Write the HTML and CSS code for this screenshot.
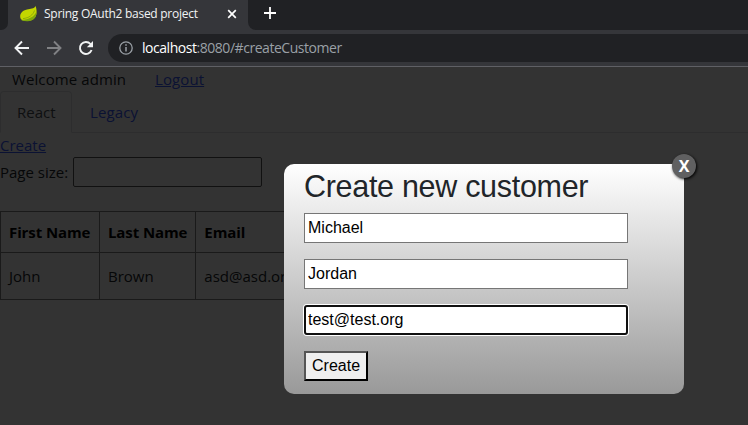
FILE: index.html
```html
<!DOCTYPE html>
<html lang="en">
<head>
<meta charset="utf-8">
<title>Spring OAuth2 based project</title>
<link rel="stylesheet" href="styles.css">
</head>
<body>
<header class="browser">
  <div class="tabstrip">
    <div class="strip-left"></div>
    <div class="tab">
      <svg class="leaf" width="18" height="18" viewBox="0 0 18 18"><path d="M15.600 1C14 3.800 10.500 3.800 7 4.500 2.500 5.500 0 8 .2 12c.2 1.600.9 2.400 2 3.200C6 16.500 12 16.500 15 12.500 17.500 9 16.600 4 15.600 1Z" fill="#c3d600"/><path d="M1 15C7 17.300 12.500 16.500 15.200 12.500 16.300 10.800 16.500 9 16.300 7 14.500 11.500 9 14.500 1 15Z" fill="#7fa80c"/><path d="M3 13.600C9 13 13 10 14.500 5.500" fill="none" stroke="#8aa80a" stroke-width=".9"/></svg>
      <span class="tab-title">Spring OAuth2 based project</span>
      <svg class="tab-close" width="10" height="10" viewBox="0 0 10 10"><path d="M1.200 1.200l7.600 7.600M8.800 1.200L1.200 8.800" stroke="#fff" stroke-width="1.700"/></svg>
    </div>
    <div class="strip-right"><svg width="12" height="12" viewBox="0 0 12 12"><path d="M6 0v12M0 6h12" stroke="#fff" stroke-width="1.800"/></svg></div>
  </div>
  <div class="toolbar">
    <svg class="nav" width="16" height="16" viewBox="0 0 16 16"><path d="M15 8H2M8 1.500L1.500 8 8 14.500" fill="none" stroke="#f1f3f4" stroke-width="1.900"/></svg>
    <svg class="nav" width="16" height="16" viewBox="0 0 16 16"><path d="M1 8h13M8 1.500L14.500 8 8 14.500" fill="none" stroke="#808184" stroke-width="1.900"/></svg>
    <svg class="nav" width="16" height="16" viewBox="0 0 16 16"><path d="M12.500 4A6 6 0 1 0 13.600 10" fill="none" stroke="#f1f3f4" stroke-width="1.900"/><path d="M15 1v6.200H8.800Z" fill="#f1f3f4"/></svg>
    <div class="address">
      <svg width="14" height="14" viewBox="0 0 14 14"><circle cx="7" cy="7" r="6.200" fill="none" stroke="#9aa0a6" stroke-width="1.300"/><path d="M7 6v4.500M7 3.300v1.500" stroke="#9aa0a6" stroke-width="1.500"/></svg>
      <span class="url"><span class="host">localhost</span>:8080/#createCustomer</span>
    </div>
  </div>
</header>
<main class="page">
  <div class="welcome"><span class="greeting">Welcome admin</span><a class="logout" href="#logout">Logout</a></div>
  <nav class="tabs"><a class="tab-link active" href="#react">React</a><a class="tab-link legacy" href="#legacy">Legacy</a></nav>
  <a class="create-link" href="#createCustomer">Create</a>
  <label class="page-size"><span>Page size:</span><input type="text"></label>
  <table class="customers">
    <tr><th class="first">First Name</th><th class="last">Last Name</th><th>Email</th></tr>
    <tr><td>John</td><td>Brown</td><td>asd@asd.org</td></tr>
  </table>
  <div class="overlay">
    <section class="dialog">
      <a class="close" href="#close">X</a>
      <h2>Create new customer</h2>
      <input type="text" value="Michael">
      <input type="text" value="Jordan">
      <input class="focused" type="text" value="test@test.org">
      <button type="button">Create</button>
    </section>
  </div>
</main>
</body>
</html>
```
FILE: styles.css
```css
* { box-sizing: border-box; }
body { margin: 0; width: 748px; height: 425px; overflow: hidden; font: 15px/24px "Open Sans", sans-serif; color: #212529; background: #fff; }
svg { display: block; flex: none; }
.browser { height: 67px; background: #35363a; border-bottom: 1px solid #5f6065; font-family: "Open Sans", sans-serif; }
.tabstrip { display: flex; height: 30px; }
.strip-left { width: 8px; background: #202124; border-bottom-right-radius: 7px; }
.tab { display: flex; align-items: center; width: 240px; padding: 0 11px 3px 12px; }
.tab-title { margin-left: 6px; width: 156px; font-size: 12px; letter-spacing: -0.27px; line-height: 18px; white-space: nowrap; color: #f1f3f4; }
.tab-close { margin-left: auto; }
.strip-right { flex: 1; padding: 7px 0 0 16px; background: #202124; border-bottom-left-radius: 8px; }
.toolbar { display: flex; align-items: center; height: 36px; padding-left: 14px; }
.nav { margin-right: 16px; }
.address { display: flex; align-items: center; align-self: flex-start; flex: 1; height: 28px; margin: 4px -20px 0 -2px; padding-left: 11px; border-radius: 14px; background: #202124; }
.url { margin-left: 9px; font-size: 14px; letter-spacing: -0.46px; color: #9aa0a6; }
.host { color: #fff; }
.page { position: relative; height: 358px; }
.welcome { display: flex; height: 24px; padding-left: 12px; }
.greeting { width: 143px; letter-spacing: 0.1px; }
.logout { letter-spacing: 0.1px; }
a { color: #3a5cff; }
.tabs { display: flex; height: 42px; border-bottom: 1px solid #dee2e6; }
.tab-link { height: 42px; padding: 9px 17px; text-decoration: none; }
.tab-link.active { width: 72px; padding: 8px 16px; color: #495057; background: #fff; border: 1px solid #dee2e6; border-bottom-color: #fff; border-radius: 4px 4px 0 0; }
.tab-link.legacy { padding-left: 18px; letter-spacing: 0.1px; }
.create-link { display: block; height: 24px; width: 60px; }
.page-size { display: flex; align-items: center; height: 30px; }
.page-size span { width: 73px; }
.page-size input { width: 189px; height: 30px; border: 1px solid #555; border-radius: 2px; }
.customers { margin-top: 24px; border-collapse: collapse; }
.customers th, .customers td { padding: 0 8px; border: 1px solid #808080; text-align: left; white-space: nowrap; }
.customers th { height: 41px; font-weight: 700; color: #000; letter-spacing: -0.1px; }
.customers td { height: 47px; }
.customers .first { width: 99px; }
.customers .last { width: 96px; }
.overlay { position: absolute; inset: 0; padding: 97px 0 0 284px; background: rgba(0, 0, 0, .8); }
.dialog { position: relative; display: flex; flex-direction: column; align-items: flex-start; gap: 16px; width: 400px; height: 230px; padding: 5px 20px 13px; border-radius: 10px; background: linear-gradient(#fff, #999); font-family: "Liberation Sans", sans-serif; }
h2 { margin: 0 0 -8px; height: 36px; font-size: 30.500px; font-weight: 400; line-height: 35px; letter-spacing: -0.3px; white-space: nowrap; }
.dialog input { width: 324px; height: 30px; padding: 1px 3px; border: 1px solid #767676; border-radius: 0; background: #fff; color: #000; font: 16px "Liberation Sans", sans-serif; outline: 0; }
.dialog .focused { border: 2px solid #101010; border-radius: 3px; padding: 0 2px; box-shadow: 0 0 0 1px #fff; }
.dialog button { width: 64px; height: 30px; padding: 1px 6px; border: 2px solid; border-color: #555 #000 #000 #555; background: #efefef; color: #000; font: 16px "Liberation Sans", sans-serif; }
.close { position: absolute; top: -10px; right: -12px; width: 24px; height: 24px; border-radius: 12px; background: #606061; color: #fff; font: bold 16px/24px "Open Sans", sans-serif; text-align: center; text-decoration: none; box-shadow: 1px 1px 3px #000; }
```
